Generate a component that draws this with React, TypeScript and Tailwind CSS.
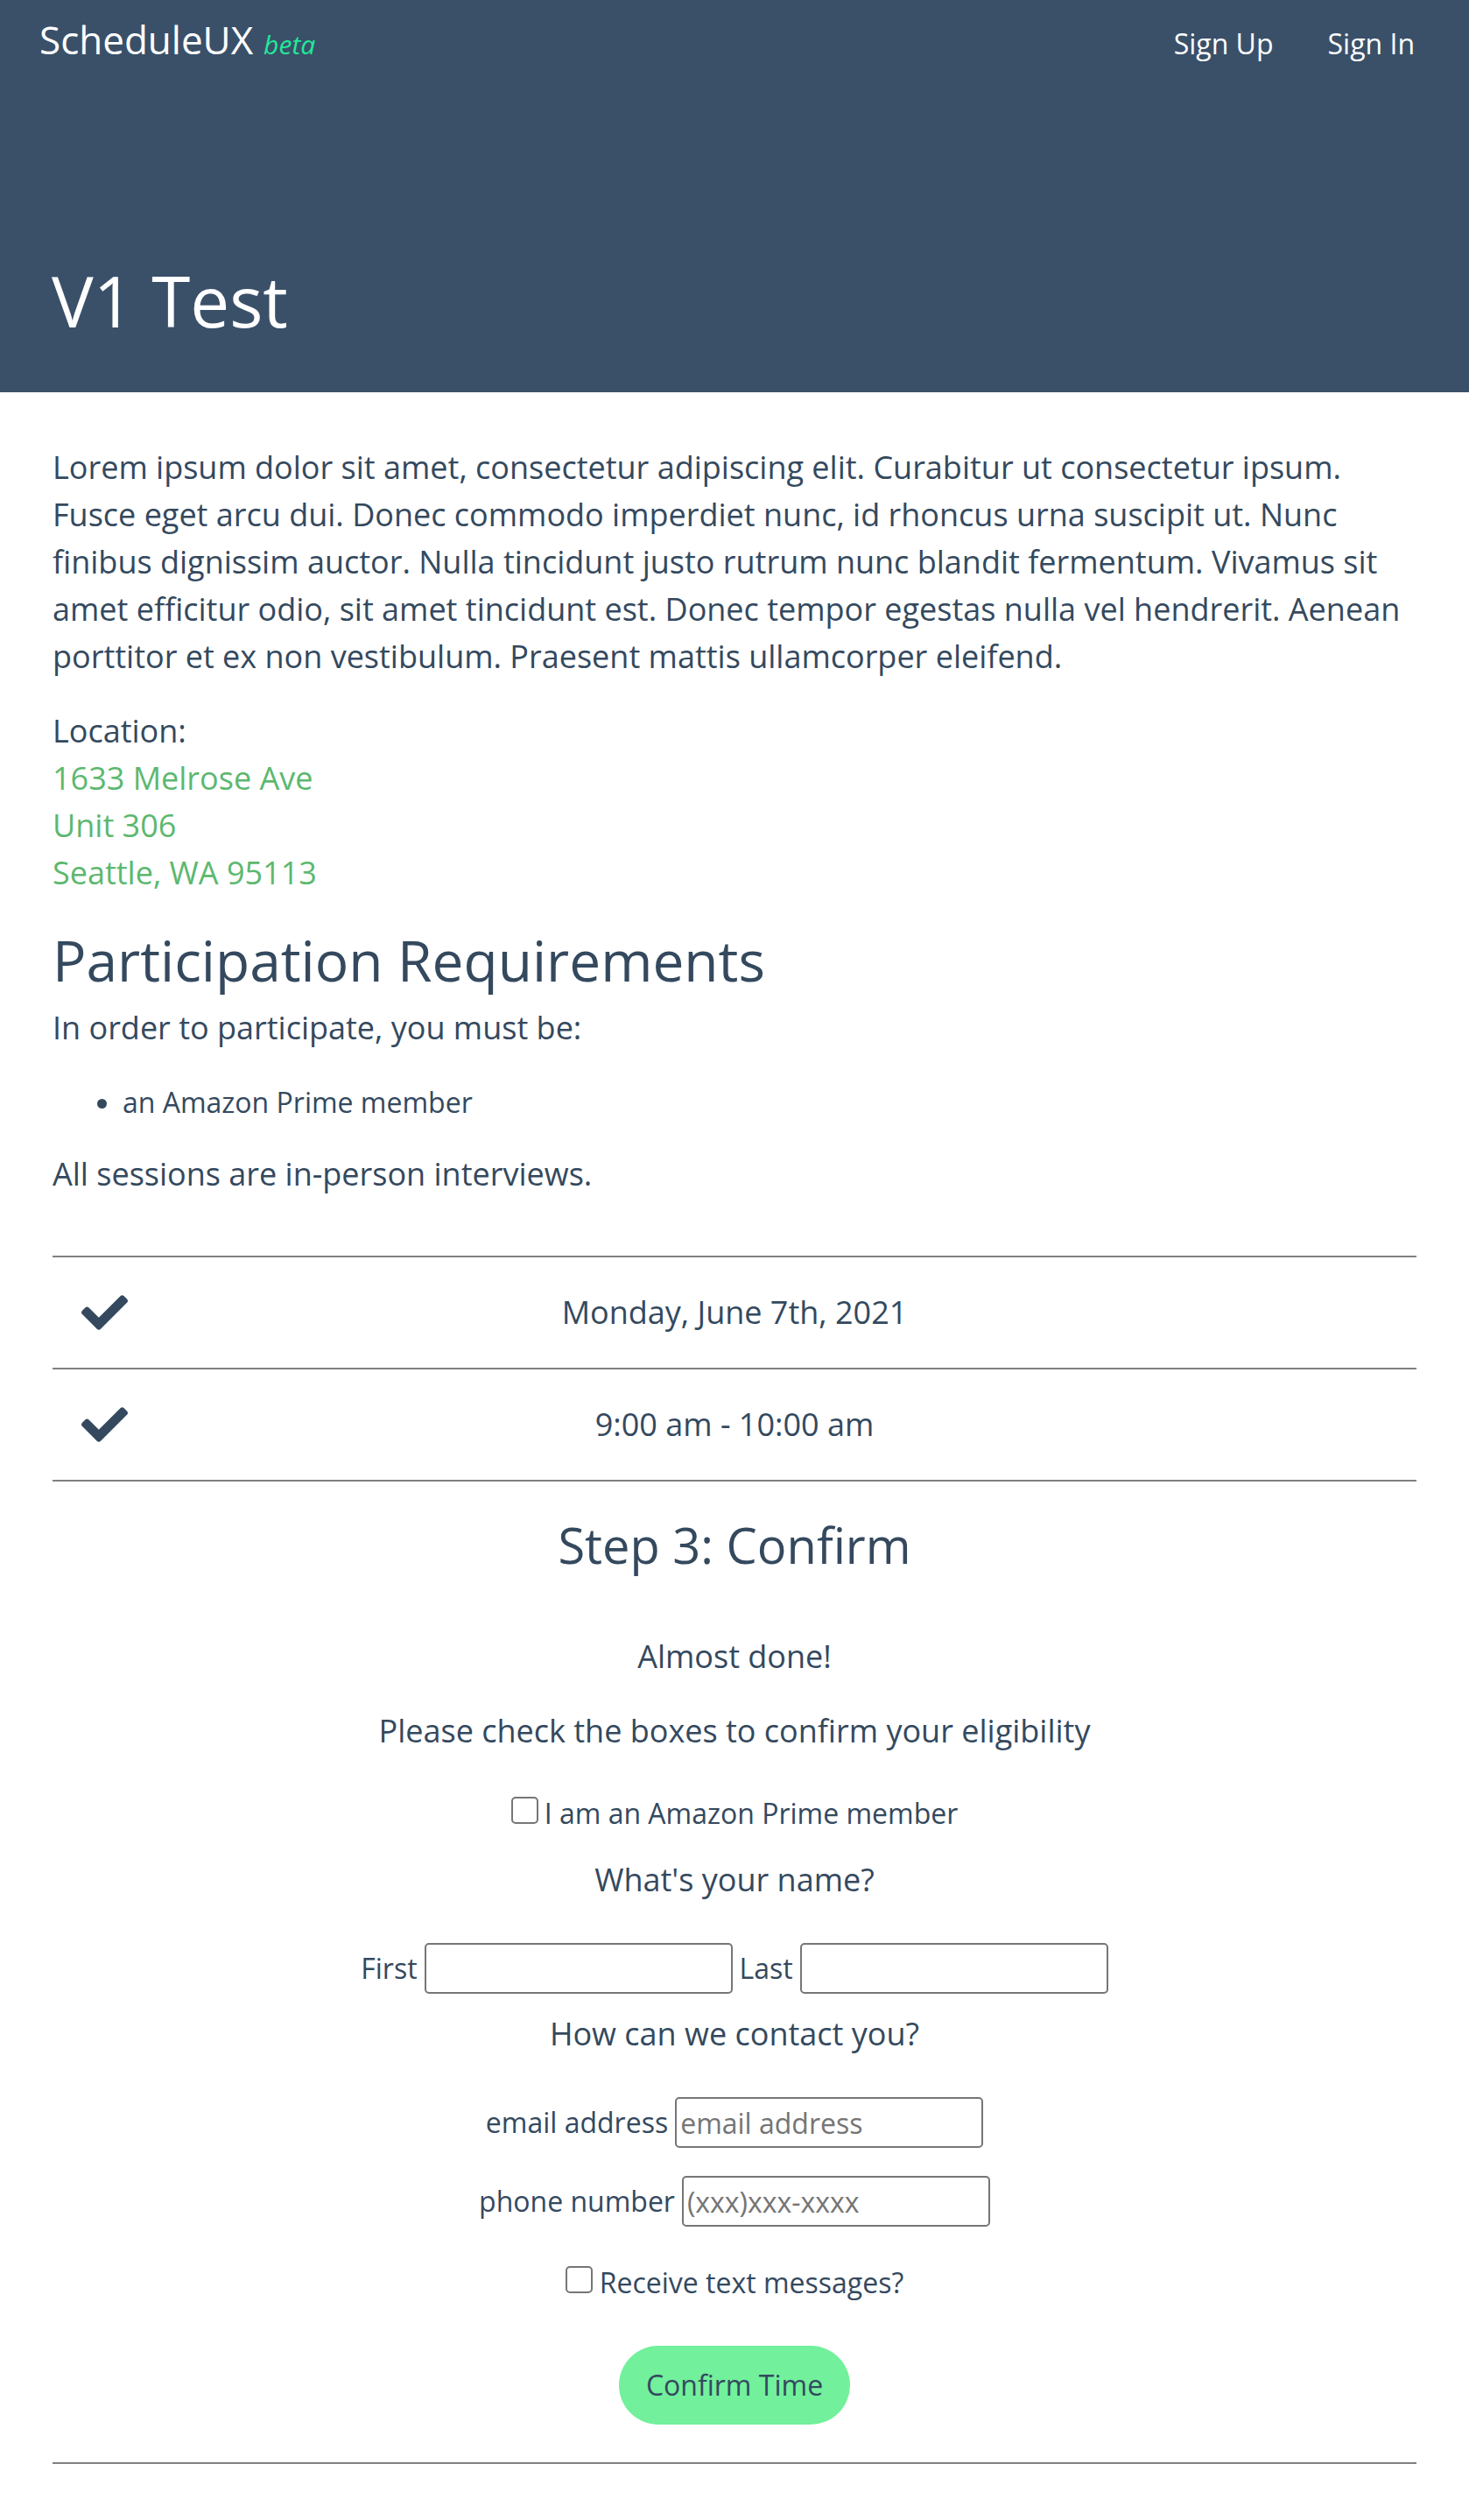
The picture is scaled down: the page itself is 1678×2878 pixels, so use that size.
import { useState } from 'react';

const TEXT = 'text-[#34495e]';

function CheckIcon() {
  return (
    <svg viewBox="0 64 512 384" className="w-[53px] h-[40px] fill-[#34495e]">
      <path d="M173.898 439.404l-166.4-166.4c-9.997-9.997-9.997-26.206 0-36.204l36.203-36.204c9.997-9.998 26.207-9.998 36.204 0L192 312.69 432.095 72.596c9.997-9.997 26.207-9.997 36.204 0l36.203 36.204c9.997 9.997 9.997 26.206 0 36.204l-294.4 294.401c-9.998 9.997-26.207 9.997-36.204-.001z" />
    </svg>
  );
}

function Header() {
  return (
    <header className="h-[448px] bg-[#3a5069] text-white">
      <nav className="flex items-baseline justify-between pt-[15px] pl-[45px] pr-[62px]">
        <div className="flex items-baseline">
          <span className="text-[44px] leading-[60px]">ScheduleUX</span>
          <span className="ml-[12px] text-[30px] italic text-[#21e99a]">beta</span>
        </div>
        <div className="flex items-baseline gap-[62px] text-[32px] leading-[48px]">
          <a href="#">Sign Up</a>
          <a href="#">Sign In</a>
        </div>
      </nav>
      <h1 className="mt-[220px] pl-[59px] text-[80px] leading-[96px]">V1 Test</h1>
    </header>
  );
}

function SlotRow({ label }: { label: string }) {
  return (
    <div className="grid grid-cols-[160px_1fr_160px] items-center h-[128px] border-t-2 border-[#808080]">
      <div className="flex items-center pl-[33px]">
        <CheckIcon />
      </div>
      <div className="text-center text-[36px] leading-[54px]">{label}</div>
      <div />
    </div>
  );
}

function Field({
  label,
  value,
  placeholder,
  onChange,
}: {
  label: string;
  value: string;
  placeholder?: string;
  onChange: (v: string) => void;
}) {
  return (
    <>
      <label className="text-[32px] leading-[48px]">{label}</label>
      <input
        type="text"
        value={value}
        placeholder={placeholder}
        onChange={(e) => onChange(e.target.value)}
        className="w-[352px] h-[58px] px-[4px] border-2 border-[#767676] rounded-[5px] bg-white text-[32px] text-[#34495e] placeholder:text-[#757575] focus:outline-none"
      />
    </>
  );
}

function Check({
  label,
  checked,
  onChange,
  gap,
}: {
  label: string;
  checked: boolean;
  onChange: (v: boolean) => void;
  gap: string;
}) {
  return (
    <label className="flex items-start text-[32px] leading-[48px]">
      <input
        type="checkbox"
        checked={checked}
        onChange={(e) => onChange(e.target.checked)}
        className={`appearance-none w-[31px] h-[31px] mt-[5px] border-2 border-[#767676] rounded-[5px] bg-white checked:bg-[#34495e] ${gap}`}
      />
      {label}
    </label>
  );
}

function ConfirmStep() {
  const [formData, setFormData] = useState({
    first: '',
    last: '',
    email: '',
    phone: '',
    prime: false,
    sms: false,
  });

  return (
    <section className="flex flex-col items-center text-center border-t-2 border-b-2 border-[#808080] pt-[39px] pb-[43px]">
      <h2 className="text-[56px] leading-[67px]">Step 3: Confirm</h2>
      <p className="mt-[67px] text-[36px] leading-[54px]">Almost done!</p>
      <p className="mt-[31px] text-[36px] leading-[54px]">Please check the boxes to confirm your eligibility</p>
      <div className="mt-[43px]">
        <Check
          label="I am an Amazon Prime member"
          checked={formData.prime}
          onChange={(v) => setFormData({ ...formData, prime: v })}
          gap="mr-[7px]"
        />
      </div>
      <p className="mt-[25px] text-[36px] leading-[54px]">What's your name?</p>
      <div className="mt-[45px] flex items-center gap-[8px]">
        <Field label="First" value={formData.first} onChange={(v) => setFormData({ ...formData, first: v })} />
        <Field label="Last" value={formData.last} onChange={(v) => setFormData({ ...formData, last: v })} />
      </div>
      <p className="mt-[19px] text-[36px] leading-[54px]">How can we contact you?</p>
      <div className="mt-[45px] flex items-center gap-[8px]">
        <Field
          label="email address"
          placeholder="email address"
          value={formData.email}
          onChange={(v) => setFormData({ ...formData, email: v })}
        />
      </div>
      <div className="mt-[32px] flex items-center gap-[8px]">
        <Field
          label="phone number"
          placeholder="(xxx)xxx-xxxx"
          value={formData.phone}
          onChange={(v) => setFormData({ ...formData, phone: v })}
        />
      </div>
      <div className="mt-[40px]">
        <Check
          label="Receive text messages?"
          checked={formData.sms}
          onChange={(v) => setFormData({ ...formData, sms: v })}
          gap="mr-[8px]"
        />
      </div>
      <button
        type="button"
        className="mt-[48px] w-[264px] h-[90px] rounded-full bg-[#72f09c] text-[32px] text-[#34495e]"
      >
        Confirm Time
      </button>
    </section>
  );
}

export default function App() {
  return (
    <div className={`font-['Open_Sans',sans-serif] bg-white ${TEXT}`}>
      <Header />
      <main className="px-[60px] pt-[59px] pb-[64px]">
        <p className="text-[36px] leading-[54px]">
          Lorem ipsum dolor sit amet, consectetur adipiscing elit. Curabitur ut consectetur ipsum. Fusce eget arcu
          dui. Donec commodo imperdiet nunc, id rhoncus urna suscipit ut. Nunc finibus dignissim auctor. Nulla
          tincidunt justo rutrum nunc blandit fermentum. Vivamus sit amet efficitur odio, sit amet tincidunt est.
          Donec tempor egestas nulla vel hendrerit. Aenean porttitor et ex non vestibulum. Praesent mattis
          ullamcorper eleifend.
        </p>

        <div className="mt-[31px] text-[36px] leading-[54px]">
          <div>Location:</div>
          <div className="text-[#5cb86f]">1633 Melrose Ave</div>
          <div className="text-[#5cb86f]">Unit 306</div>
          <div className="text-[#5cb86f]">Seattle, WA 95113</div>
        </div>

        <h2 className="mt-[34px] text-[64px] leading-[77px]">Participation Requirements</h2>
        <p className="mt-[12px] text-[36px] leading-[54px]">In order to participate, you must be:</p>
        <ul className="mt-[34px] list-disc pl-[80px] text-[32px] leading-[48px]">
          <li>an Amazon Prime member</li>
        </ul>
        <p className="mt-[31px] text-[36px] leading-[54px]">All sessions are in-person interviews.</p>

        <div className="mt-[66px]">
          <SlotRow label="Monday, June 7th, 2021" />
          <SlotRow label="9:00 am - 10:00 am" />
          <ConfirmStep />
        </div>
      </main>
    </div>
  );
}
